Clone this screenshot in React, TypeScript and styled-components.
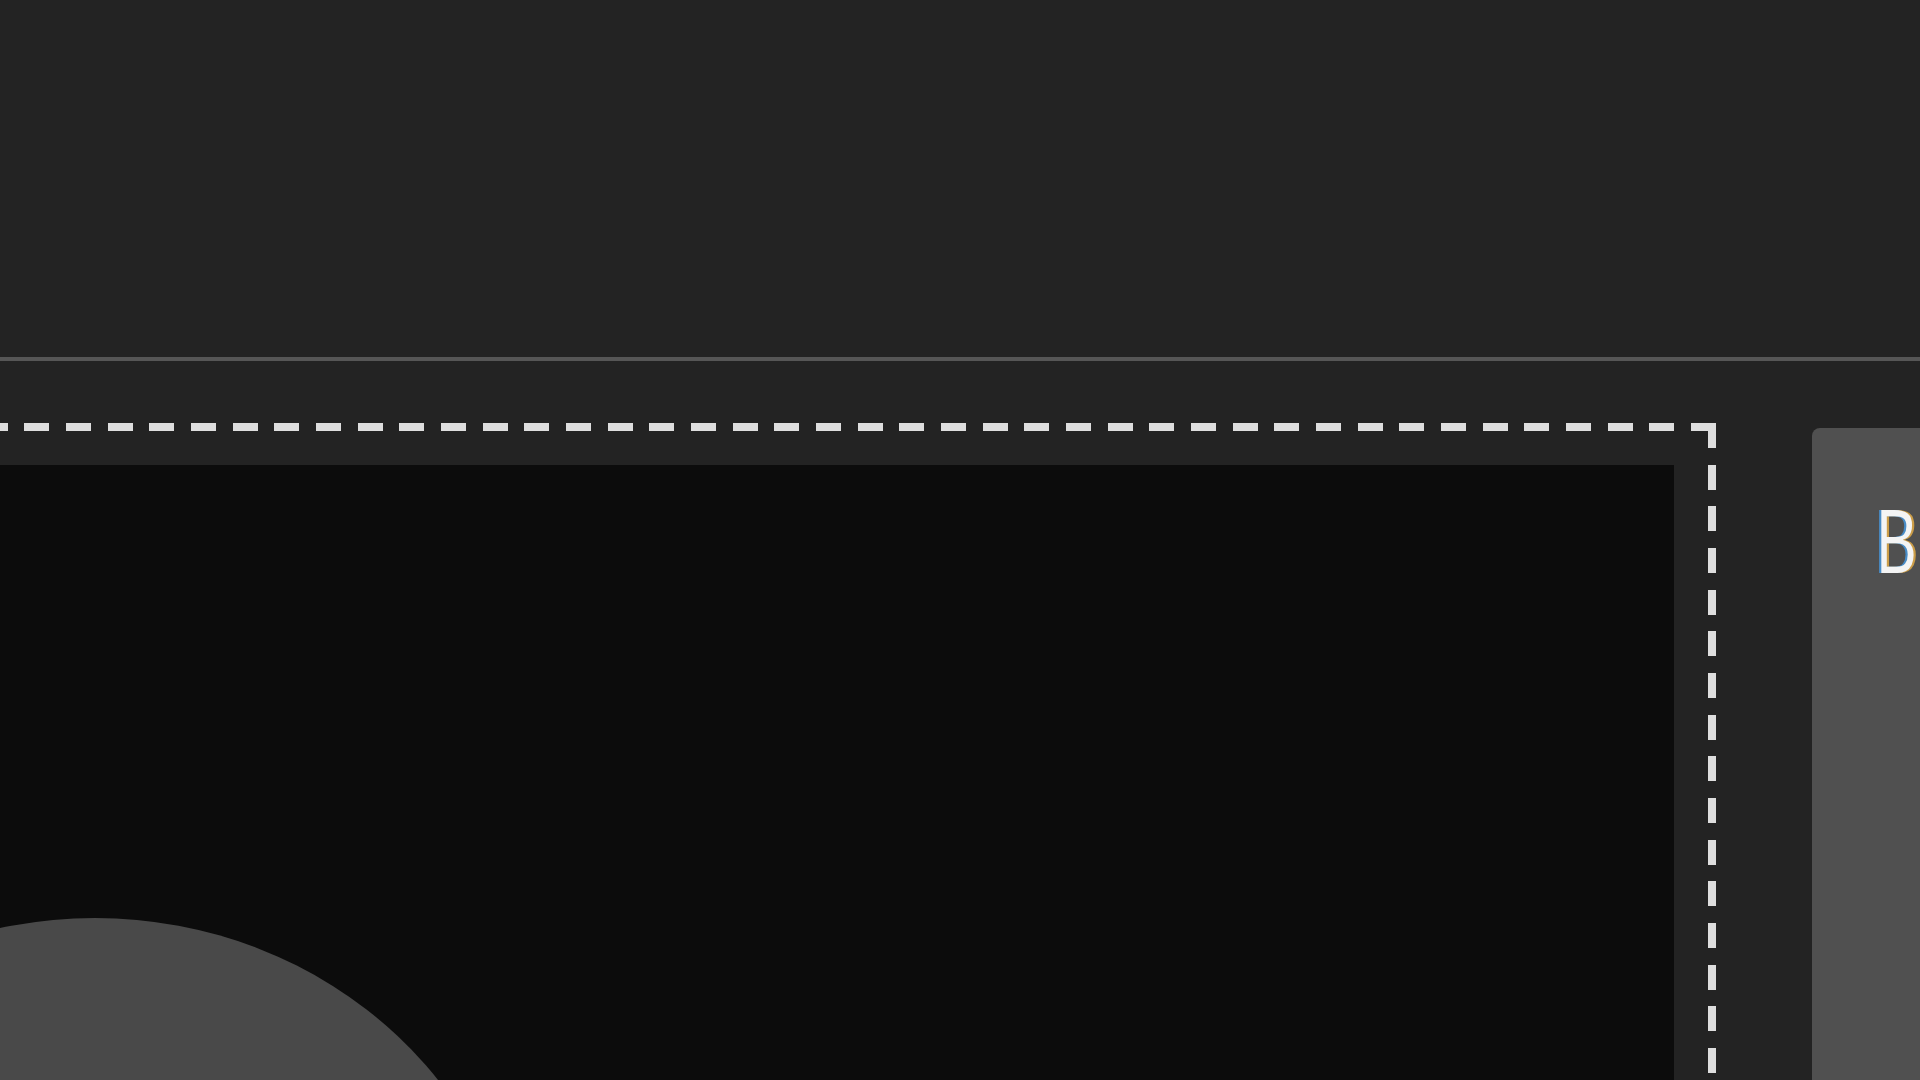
import React from "react";
import styled, { createGlobalStyle } from "styled-components";

const GlobalStyle = createGlobalStyle`
  html, body {
    margin: 0;
    padding: 0;
    height: 100%;
    background: #232323;
    overflow: hidden;
  }
  #root {
    height: 100%;
  }
`;

const App: React.FC = () => {
  return (
    <>
      <GlobalStyle />
      <Page>
        <Header />
        <Stage>
          <DropFrame>
            <VideoTile>
              <Avatar />
            </VideoTile>
          </DropFrame>
          <SidePanel>
            <PanelLabel>B</PanelLabel>
          </SidePanel>
        </Stage>
      </Page>
    </>
  );
};

export default App;

const Page = styled.div`
  display: flex;
  flex-direction: column;
  height: 100vh;
  overflow: hidden;
`;

const Header = styled.header`
  flex: none;
  height: 357px;
  border-bottom: 4px solid #565656;
`;

const Stage = styled.main`
  display: flex;
  align-items: flex-start;
  padding-top: 62px;
`;

const DropFrame = styled.section`
  flex: 0 0 3242px;
  margin-left: -1526px;
  height: 1000px;
  box-sizing: border-box;
  padding: 42px;
  background-image: repeating-linear-gradient(
      to left,
      #dedede 0 25px,
      transparent 25px 41.67px
    ),
    repeating-linear-gradient(
      to bottom,
      #dedede 0 25px,
      transparent 25px 41.67px
    );
  background-size: 100% 8px, 8px 100%;
  background-position: right top, right top;
  background-repeat: no-repeat;
`;

const VideoTile = styled.div`
  display: flex;
  justify-content: center;
  height: 100%;
  box-sizing: border-box;
  padding-top: 453px;
  background: #0c0c0c;
  overflow: hidden;
`;

const Avatar = styled.div`
  flex: none;
  width: 856px;
  height: 806px;
  border-radius: 50%;
  background: #494949;
`;

const SidePanel = styled.aside`
  flex: 0 0 400px;
  margin-left: 96px;
  margin-top: 5px;
  height: 900px;
  box-sizing: border-box;
  padding: 67px 0 0 63px;
  background: #505050;
  border-top-left-radius: 8px;
`;

const PanelLabel = styled.span`
  display: inline-block;
  font-family: "Open Sans", "Noto Sans", sans-serif;
  font-weight: 400;
  font-size: 88px;
  line-height: 1;
  color: #f4f4f4;
  transform: scaleX(0.74);
  transform-origin: left top;
  text-shadow: -3px 0 rgba(70, 150, 220, 0.85), 3px 0 rgba(225, 170, 70, 0.85);
`;
